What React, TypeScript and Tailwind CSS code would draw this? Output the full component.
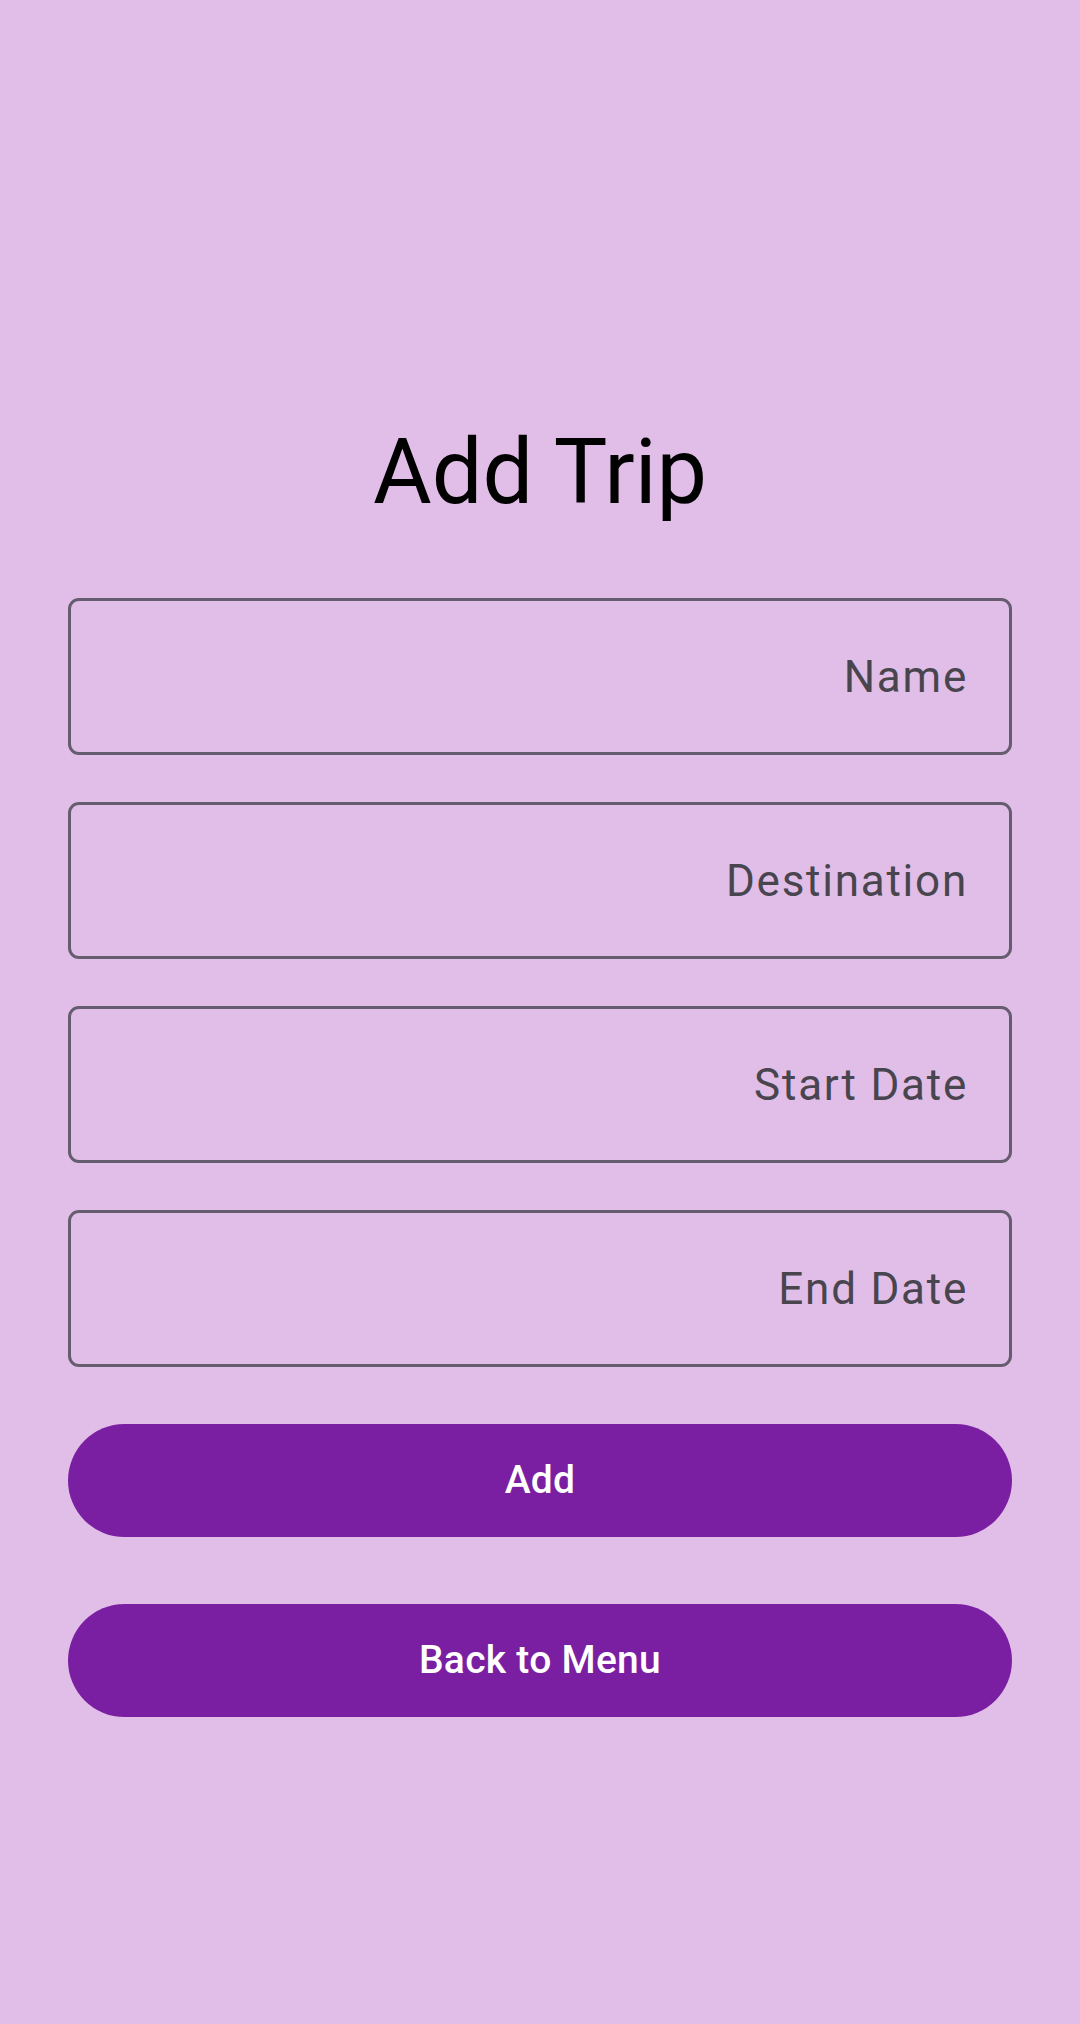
import React from "react";

const fields = ["Name", "Destination", "Start Date", "End Date"];

const App: React.FC = () => {
  return (
    <div
      className="min-h-screen w-full bg-[#e1bee7] px-[68px] pt-[428px] flex flex-col"
      style={{ fontFamily: "Roboto, 'Noto Sans', sans-serif" }}
    >
      <h1 className="text-[90px] leading-none font-normal text-black text-center">
        Add Trip
      </h1>

      <form className="mt-[80px] flex flex-col">
        <div className="flex flex-col gap-[47px]">
          {fields.map((label) => (
            <input
              key={label}
              type="text"
              placeholder={label}
              className="h-[157px] w-full rounded-[11px] border-[3px] border-[#655d6f] bg-transparent pl-[44px] pr-[41px] text-right text-[44px] tracking-[0.04em] text-[#1d1b20] placeholder:text-[#49454f] outline-none"
            />
          ))}
        </div>

        <div className="mt-[57px] flex flex-col gap-[67px]">
          <button
            type="button"
            className="h-[113px] w-full rounded-full bg-[#7b1fa2] text-white text-[39px] font-medium tracking-[0.007em]"
          >
            Add
          </button>
          <button
            type="button"
            className="h-[113px] w-full rounded-full bg-[#7b1fa2] text-white text-[39px] font-medium tracking-[0.007em]"
          >
            Back to Menu
          </button>
        </div>
      </form>
    </div>
  );
};

export default App;
